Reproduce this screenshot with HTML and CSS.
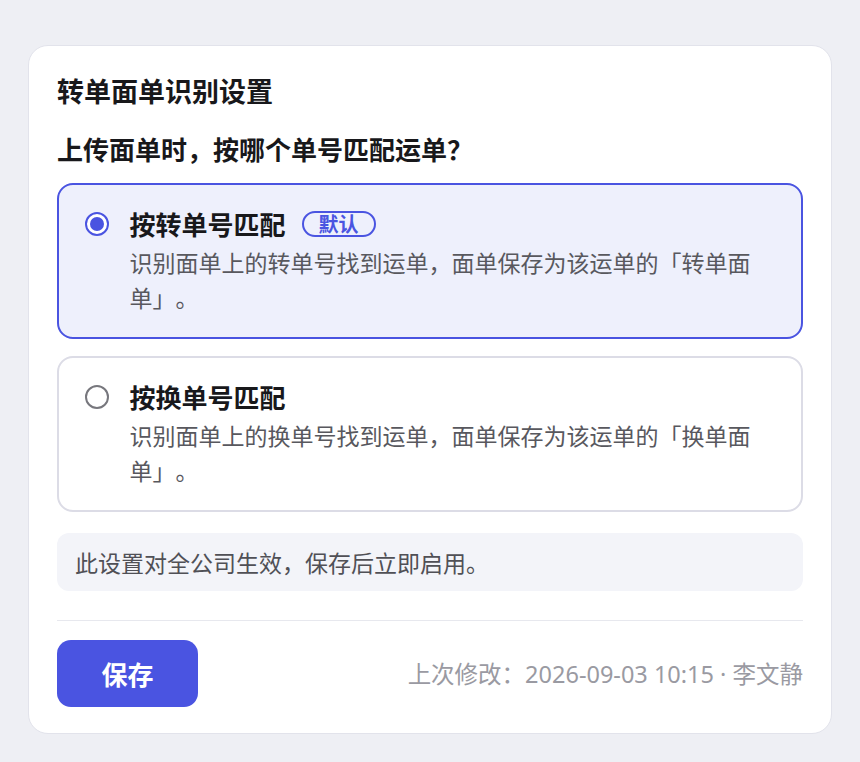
FILE: index.html
```html
<!DOCTYPE html>
<html lang="zh-CN">
<head>
<meta charset="utf-8">
<title>转单面单识别设置</title>
<link rel="stylesheet" href="styles.css">
</head>
<body>
<div class="card">
  <h1 class="title">转单面单识别设置</h1>
  <h2 class="question">上传面单时，按哪个单号匹配运单？</h2>
  <div class="options">
    <label class="option selected">
      <span class="radio"><span class="dot"></span></span>
      <span class="opt-body">
        <span class="opt-title">按转单号匹配<span class="badge">默认</span></span>
        <span class="opt-desc">识别面单上的转单号找到运单，面单保存为该运单的「转单面单」。</span>
      </span>
    </label>
    <label class="option">
      <span class="radio"></span>
      <span class="opt-body">
        <span class="opt-title">按换单号匹配</span>
        <span class="opt-desc">识别面单上的换单号找到运单，面单保存为该运单的「换单面单」。</span>
      </span>
    </label>
  </div>
  <div class="info">此设置对全公司生效，保存后立即启用。</div>
  <div class="divider"></div>
  <div class="footer">
    <button class="save">保存</button>
    <span class="meta">上次修改：2026-09-03 10:15 · 李文静</span>
  </div>
</div>
</body>
</html>
```
FILE: styles.css
```css
* { box-sizing: border-box; }
html, body { margin: 0; padding: 0; }
body {
  background: #eeeff4;
  font-family: "Noto Sans CJK SC", "Noto Sans", sans-serif;
  color: #1b1b1f;
  padding: 45px 28px 29px;
  text-spacing-trim: space-all;
}
.card {
  background: #fff;
  border: 1.5px solid #e2e3eb;
  border-radius: 20px;
  padding: 27px 28px 25.5px;
}
.title {
  margin: 0;
  font-size: 27px;
  font-weight: 700;
  line-height: 36px;
  color: #18181b;
}
.question {
  margin: 22px 0 0;
  font-size: 26px;
  font-weight: 700;
  line-height: 36px;
  color: #18181b;
}
.options {
  margin-top: 15.5px;
  display: flex;
  flex-direction: column;
  gap: 17px;
}
.option {
  display: flex;
  gap: 21px;
  border: 2.5px solid #dcdce6;
  border-radius: 16px;
  padding: 22.5px 26px 21.5px 25.5px;
  background: #fff;
}
.option.selected {
  border-color: #4a54e1;
  background: #eef0fc;
}
.radio {
  flex: none;
  width: 24px;
  height: 24px;
  margin-top: 5px;
  border: 2px solid #77777d;
  border-radius: 50%;
  display: flex;
  align-items: center;
  justify-content: center;
  background: #fff;
}
.selected .radio { border-color: #4a54e1; }
.dot {
  width: 14px;
  height: 14px;
  border-radius: 50%;
  background: #4a54e1;
}
.opt-body { display: flex; flex-direction: column; }
.opt-title {
  display: flex;
  align-items: center;
  font-size: 26px;
  font-weight: 700;
  line-height: 34px;
  color: #18181b;
}
.badge {
  margin-left: 16px;
  border: 2px solid #4a54e1;
  border-radius: 999px;
  padding: 0 15px;
  font-size: 20px;
  line-height: 22px;
  font-weight: 700;
  color: #4a54e1;
}
.opt-desc {
  margin-top: 4px;
  font-size: 23px;
  line-height: 35px;
  color: #58585e;
}
.info {
  margin-top: 21px;
  background: #f3f4f9;
  border-radius: 12px;
  padding: 13px 18px;
  font-size: 23px;
  line-height: 32px;
  color: #505056;
}
.divider {
  margin-top: 29px;
  height: 1.5px;
  background: #e7e8ee;
}
.footer {
  margin-top: 19px;
  display: flex;
  align-items: center;
  justify-content: space-between;
}
.save {
  width: 141px;
  height: 67px;
  border: none;
  border-radius: 14px;
  background: #4a54e1;
  color: #fff;
  font-family: inherit;
  font-size: 26px;
  font-weight: 700;
  padding: 0;
}
.meta {
  font-family: "Noto Sans", "Noto Sans CJK SC", sans-serif;
  font-size: 23.5px;
  color: #9a9aa2;
  line-height: 32px;
}
```
